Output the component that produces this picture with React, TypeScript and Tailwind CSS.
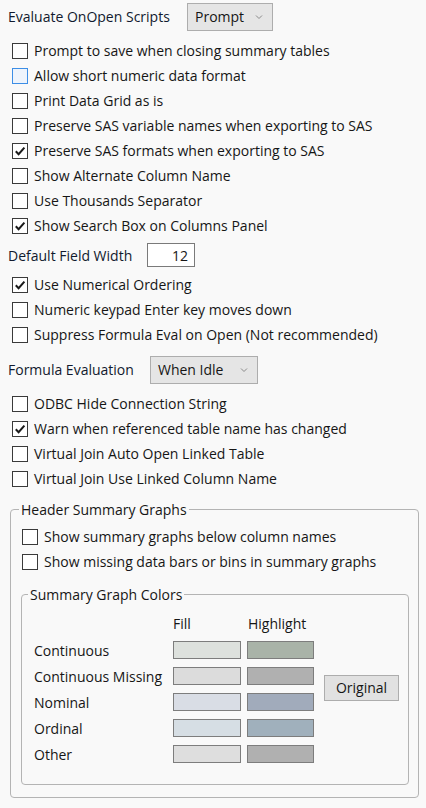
import React from 'react';

const FONT = "font-['Open_Sans',sans-serif]";

function Check({ checked = false, focus = false }: { checked?: boolean; focus?: boolean }) {
  return (
    <span
      className={`flex h-4 w-4 shrink-0 items-center justify-center border ${
        focus ? 'border-[#3d8ee6] bg-[#eef4fc]' : 'border-[#3a3a3a] bg-white'
      }`}>
      {checked && (
        <svg width="12" height="12" viewBox="0 0 12 12">
          <polyline points="1.8,6.2 4.6,9.2 10.4,2.6" fill="none" stroke="#1a1a1a" strokeWidth="2" />
        </svg>
      )}
    </span>
  );
}

function Row({ label, checked, focus }: { label: string; checked?: boolean; focus?: boolean }) {
  return (
    <div className="flex h-[25px] items-center gap-[6px]">
      <Check checked={checked} focus={focus} />
      <span className="whitespace-nowrap">{label}</span>
    </div>
  );
}

function Chevron() {
  return (
    <svg width="8" height="6" viewBox="0 0 8 6" className="shrink-0">
      <polyline points="1,1.5 4,4.5 7,1.5" fill="none" stroke="#8a8a8a" strokeWidth="1" />
    </svg>
  );
}

function Select({ value, w }: { value: string; w: string }) {
  return (
    <div className={`flex h-[28px] items-center justify-between border border-[#adadad] bg-[#e5e5e5] pl-[7px] pr-[9px] ${w}`}>
      <span>{value}</span>
      <Chevron />
    </div>
  );
}

const COLORS = [
  { name: 'Continuous', fill: 'bg-[#dde1dd]', hi: 'bg-[#a9b3a8]' },
  { name: 'Continuous Missing', fill: 'bg-[#dcdcdc]', hi: 'bg-[#b0b0b0]' },
  { name: 'Nominal', fill: 'bg-[#d9dde5]', hi: 'bg-[#a1abbb]' },
  { name: 'Ordinal', fill: 'bg-[#d6dee4]', hi: 'bg-[#a0b0bc]' },
  { name: 'Other', fill: 'bg-[#dedede]', hi: 'bg-[#b0b0b0]' },
];

export default function App() {
  return (
    <div className={`h-[808px] w-[426px] overflow-hidden bg-[#f9f9f9] text-[14px] text-[#161616] ${FONT}`}>
      {/* top selector */}
      <div className="flex h-[32px] items-center pl-2 pt-[1px]">
        <span className="w-[179px] whitespace-nowrap text-[#111a2e]">Evaluate OnOpen Scripts</span>
        <Select value="Prompt" w="w-[86px]" />
      </div>

      <div className="mt-[6px] pl-3">
        <Row label="Prompt to save when closing summary tables" />
        <Row label="Allow short numeric data format" focus />
        <Row label="Print Data Grid as is" />
        <Row label="Preserve SAS variable names when exporting to SAS" />
        <Row label="Preserve SAS formats when exporting to SAS" checked />
        <Row label="Show Alternate Column Name" />
        <Row label="Use Thousands Separator" />
        <Row label="Show Search Box on Columns Panel" checked />
      </div>

      <div className="flex h-[34px] items-center pl-2">
        <span className="w-[139px] whitespace-nowrap text-[#111a2e]">Default Field Width</span>
        <div className="flex h-[24px] w-[48px] items-center justify-end border border-[#7a7a7a] bg-white pr-[6px]">12</div>
      </div>

      <div className="pl-3">
        <Row label="Use Numerical Ordering" checked />
        <Row label="Numeric keypad Enter key moves down" />
        <Row label="Suppress Formula Eval on Open (Not recommended)" />
      </div>

      <div className="flex h-[44px] items-center pl-2 pt-[1px]">
        <span className="w-[142px] whitespace-nowrap text-[#111a2e]">Formula Evaluation</span>
        <Select value="When Idle" w="w-[108px]" />
      </div>

      <div className="pl-3">
        <Row label="ODBC Hide Connection String" />
        <Row label="Warn when referenced table name has changed" checked />
        <Row label="Virtual Join Auto Open Linked Table" />
        <Row label="Virtual Join Use Linked Column Name" />
      </div>

      {/* Header Summary Graphs */}
      <fieldset className="ml-[10px] mr-[7px] mt-[10px] rounded-[4px] border border-[#b4b4b4] pb-[12px] pl-[10px] pr-[9px]">
        <legend className="ml-[-2px] px-[2px] leading-[17px]">Header Summary Graphs</legend>
        <div className="mt-[6px] pl-[1px]">
          <Row label="Show summary graphs below column names" />
          <Row label="Show missing data bars or bins in summary graphs" />
        </div>

        <fieldset className="mt-[12px] rounded-[4px] border border-[#b4b4b4] pb-[17px] pl-[12px]">
          <legend className="ml-[-6px] px-[2px] leading-[17px]">Summary Graph Colors</legend>
          <div className="mt-[6px] grid grid-cols-[133px_68px_67px_86px] grid-rows-[28px_repeat(5,26px)] items-center gap-x-[6px]">
            <span />
            <span>Fill</span>
            <span className="pl-[1px]">Highlight</span>
            <span />
            {COLORS.map((c, i) => (
              <React.Fragment key={c.name}>
                <span className="col-start-1 whitespace-nowrap" style={{ gridRow: i + 2 }}>{c.name}</span>
                <span className={`col-start-2 h-[18px] border border-[#7d7d7d] ${c.fill}`} style={{ gridRow: i + 2 }} />
                <span className={`col-start-3 h-[18px] border border-[#7d7d7d] ${c.hi}`} style={{ gridRow: i + 2 }} />
              </React.Fragment>
            ))}
            <div className="col-start-4 row-start-3 row-end-5 ml-[4px] mb-[3px] flex h-[26px] w-[75px] items-center justify-center border border-[#adadad] bg-[#e1e1e1]">
              Original
            </div>
          </div>
        </fieldset>
      </fieldset>
    </div>
  );
}
